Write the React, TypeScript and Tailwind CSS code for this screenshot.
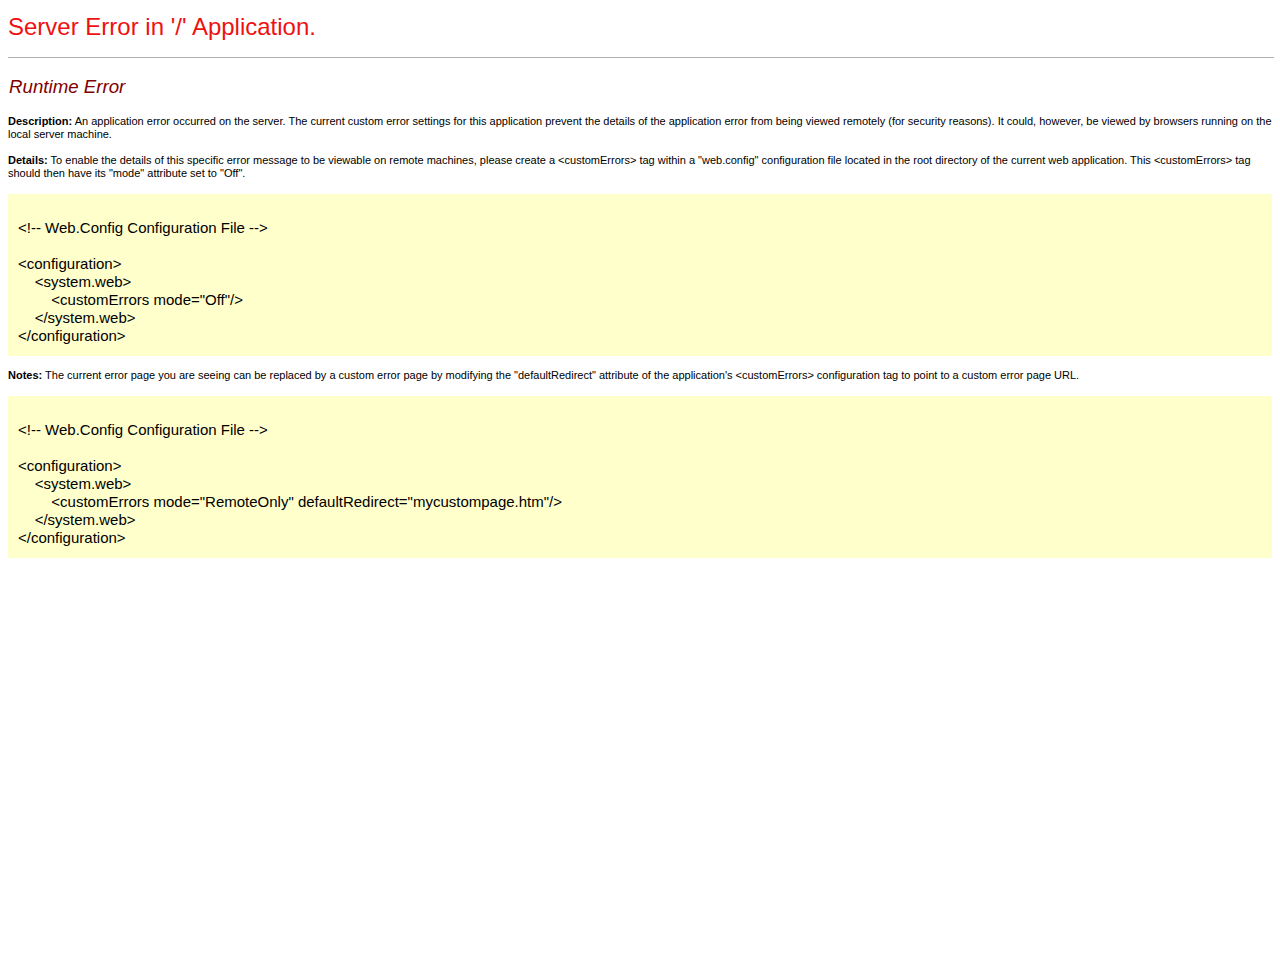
export default function App() {
  const f = { fontFamily: '"Liberation Sans", Arial, sans-serif' };
  const Code = ({ lines }: { lines: string[] }) => (
    <div className="mt-[14px] bg-[#ffffcc] pl-[10px] pt-[7px] pb-[11px] text-[15px] leading-[18px] text-black whitespace-pre">
      {["", ...lines].map((l, i) => (
        <div key={i} className="h-[18px]">{l}</div>
      ))}
    </div>
  );
  return (
    <div className="bg-white min-h-[960px] px-2 pt-2 text-black" style={f}>
      <h1 className="mt-[3px] text-[24px] leading-[32px] text-[#ee1111] font-normal">Server Error in '/' Application.</h1>
      <hr className="mt-[14px] border-0 border-t border-[#b0b0b0] mr-[-2px]" />
      <h2 className="mt-[17px] ml-[1px] text-[18.7px] leading-[24px] italic text-[#800000] font-normal">Runtime Error</h2>
      <p className="mt-[16px] text-[11px] leading-[13px]"><b>Description:</b> An application error occurred on the server. The current custom error settings for this application prevent the details of the application error from being viewed remotely (for security reasons). It could, however, be viewed by browsers running on the local server machine.</p>
      <p className="mt-[13px] text-[11px] leading-[13px]"><b>Details:</b> To enable the details of this specific error message to be viewable on remote machines, please create a &lt;customErrors&gt; tag within a "web.config" configuration file located in the root directory of the current web application. This &lt;customErrors&gt; tag should then have its "mode" attribute set to "Off".</p>
      <Code lines={["<!-- Web.Config Configuration File -->", "", "<configuration>", "    <system.web>", '        <customErrors mode="Off"/>', "    </system.web>", "</configuration>"]} />
      <p className="mt-[12.5px] text-[11px] leading-[13px]"><b>Notes:</b> The current error page you are seeing can be replaced by a custom error page by modifying the "defaultRedirect" attribute of the application's &lt;customErrors&gt; configuration tag to point to a custom error page URL.</p>
      <Code lines={["<!-- Web.Config Configuration File -->", "", "<configuration>", "    <system.web>", '        <customErrors mode="RemoteOnly" defaultRedirect="mycustompage.htm"/>', "    </system.web>", "</configuration>"]} />
    </div>
  );
}
